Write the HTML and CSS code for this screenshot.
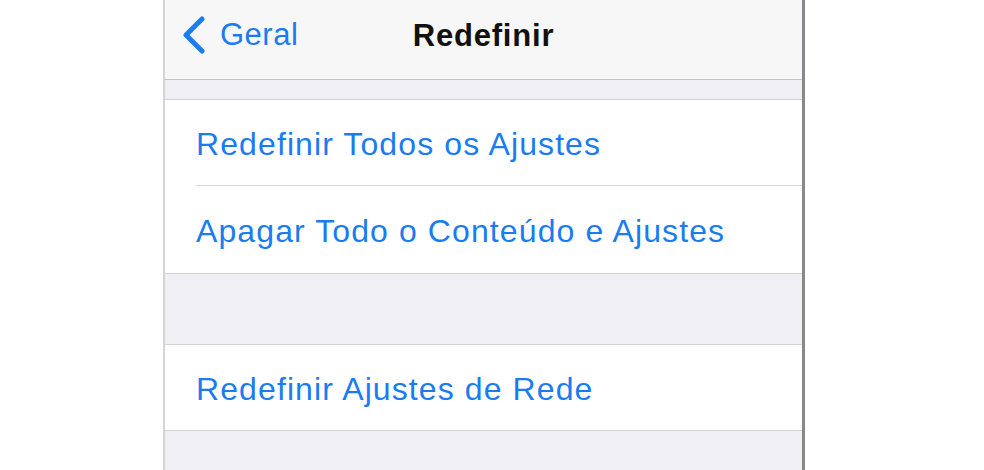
FILE: index.html
```html
<!DOCTYPE html>
<html lang="pt">
<head>
    <meta charset="UTF-8">
    <meta name="viewport" content="width=device-width, initial-scale=1.0">
    <title>Redefinir</title>
    <link rel="stylesheet" href="styles.css">
</head>
<body>
    <div class="phone">
        <header class="navbar">
            <a class="back" href="#">
                <svg class="chevron" width="26" height="38" viewBox="0 0 26 38">
                    <path d="M21 3 L5 19 L21 35" fill="none" stroke="currentColor" stroke-width="5" stroke-linecap="round" stroke-linejoin="round"/>
                </svg>
                <span>Geral</span>
            </a>
            <h1 class="title">Redefinir</h1>
        </header>

        <div class="gap gap-top"></div>
        <ul class="group">
            <li class="cell">Redefinir Todos os Ajustes</li>
            <li class="cell">Apagar Todo o Conteúdo e Ajustes</li>
        </ul>

        <div class="gap gap-mid"></div>
        <ul class="group">
            <li class="cell">Redefinir Ajustes de Rede</li>
        </ul>

        <div class="gap gap-rest"></div>
    </div>
</body>
</html>
```

FILE: styles.css
```css
body {
    margin: 0;
    background-color: #fff;
    font-family: 'Liberation Sans', Arial, Helvetica, sans-serif;
    overflow: hidden;
}
.phone {
    width: 637px;
    height: 470px;
    margin-left: 163px;
    border-left: 2px solid #d4d4d6;
    border-right: 3px solid #88888a;
    background-color: #efeff4;
    display: flex;
    flex-direction: column;
}
.navbar {
    position: relative;
    height: 80px;
    flex-shrink: 0;
    background-color: #f7f7f8;
    border-bottom: 1px solid #c2c2c4;
    display: flex;
    align-items: center;
    justify-content: center;
    padding-bottom: 7px;
    box-sizing: border-box;
}
.back {
    position: absolute;
    left: 16px;
    top: 16px;
    display: flex;
    align-items: center;
    gap: 13px;
    color: #1a7cf0;
    text-decoration: none;
    font-size: 31px;
    letter-spacing: 0.5px;
}
.chevron {
    display: block;
}
.title {
    margin: 0;
    font-size: 31px;
    font-weight: bold;
    letter-spacing: 0.8px;
    color: #111;
}
.gap {
    flex-shrink: 0;
}
.gap-top {
    height: 19px;
}
.gap-mid {
    height: 70px;
}
.gap-rest {
    flex: 1;
}
.group {
    list-style: none;
    margin: 0;
    padding: 0 0 0 31px;
    background-color: #fff;
    border-top: 1px solid #d2d2d6;
    border-bottom: 1px solid #d2d2d6;
}
.cell {
    box-sizing: border-box;
    height: 85px;
    padding-top: 3px;
    display: flex;
    align-items: center;
    font-size: 32px;
    letter-spacing: 1.1px;
    color: #1a7cf0;
}
.cell + .cell {
    border-top: 1px solid #d6d6da;
    height: 88px;
}
```
